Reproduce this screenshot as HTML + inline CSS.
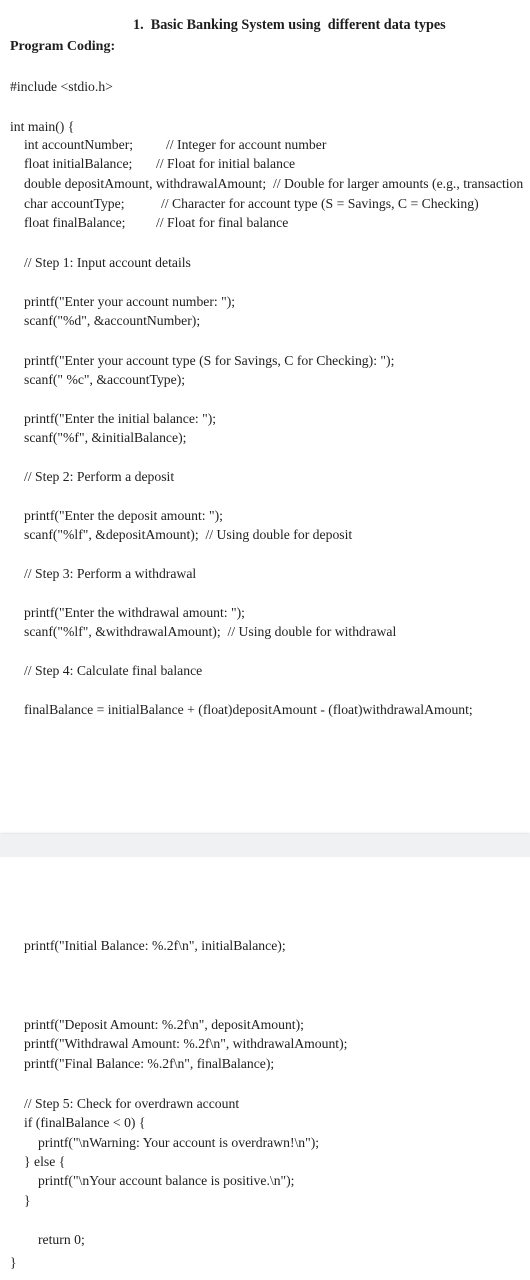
<!DOCTYPE html>
<html><head><meta charset="utf-8"><style>
html,body{margin:0;padding:0;background:#fff;}
body{width:530px;height:1280px;position:relative;overflow:hidden;font-family:"Liberation Serif",serif;font-size:13.7px;color:#1e1e1e;}
.l{position:absolute;white-space:pre;line-height:16px;}
.b{font-weight:bold;}
.band{position:absolute;left:0;top:834px;width:530px;height:23px;background:#f0f1f3;box-shadow:0 -1px 2px rgba(0,0,0,0.12);}
</style></head><body>
<div class="l b" style="left:133px;top:17px;font-size:14.2px">1.  Basic Banking System using  different data types</div>
<div class="l b" style="left:10px;top:39px;font-size:14px">Program Coding:</div>
<div class="l" style="left:10px;top:79px">#include &lt;stdio.h&gt;</div>
<div class="l" style="left:10px;top:119px">int main() {</div>
<div class="l" style="left:24px;top:137px">int accountNumber;</div><div class="l" style="left:166px;top:137px">// Integer for account number</div>
<div class="l" style="left:24px;top:156px">float initialBalance;</div><div class="l" style="left:156px;top:156px">// Float for initial balance</div>
<div class="l" style="left:24px;top:176px">double depositAmount, withdrawalAmount;  // Double for larger amounts (e.g., transaction</div>
<div class="l" style="left:24px;top:196px">char accountType;</div><div class="l" style="left:161px;top:196px">// Character for account type (S = Savings, C = Checking)</div>
<div class="l" style="left:24px;top:215px">float finalBalance;</div><div class="l" style="left:156px;top:215px">// Float for final balance</div>
<div class="l" style="left:24px;top:255px">// Step 1: Input account details</div>
<div class="l" style="left:24px;top:294px">printf("Enter your account number: ");</div>
<div class="l" style="left:24px;top:313px">scanf("%d", &amp;accountNumber);</div>
<div class="l" style="left:24px;top:353px">printf("Enter your account type (S for Savings, C for Checking): ");</div>
<div class="l" style="left:24px;top:372px">scanf(" %c", &amp;accountType);</div>
<div class="l" style="left:24px;top:411px">printf("Enter the initial balance: ");</div>
<div class="l" style="left:24px;top:430px">scanf("%f", &amp;initialBalance);</div>
<div class="l" style="left:24px;top:469px">// Step 2: Perform a deposit</div>
<div class="l" style="left:24px;top:508px">printf("Enter the deposit amount: ");</div>
<div class="l" style="left:24px;top:527px">scanf("%lf", &amp;depositAmount);  // Using double for deposit</div>
<div class="l" style="left:24px;top:566px">// Step 3: Perform a withdrawal</div>
<div class="l" style="left:24px;top:605px">printf("Enter the withdrawal amount: ");</div>
<div class="l" style="left:24px;top:624px">scanf("%lf", &amp;withdrawalAmount);  // Using double for withdrawal</div>
<div class="l" style="left:24px;top:663px">// Step 4: Calculate final balance</div>
<div class="l" style="left:24px;top:702px">finalBalance = initialBalance + (float)depositAmount - (float)withdrawalAmount;</div>
<div class="band"></div>
<div class="l" style="left:24px;top:938px">printf("Initial Balance: %.2f\n", initialBalance);</div>
<div class="l" style="left:24px;top:1017px">printf("Deposit Amount: %.2f\n", depositAmount);</div>
<div class="l" style="left:24px;top:1036px">printf("Withdrawal Amount: %.2f\n", withdrawalAmount);</div>
<div class="l" style="left:24px;top:1056px">printf("Final Balance: %.2f\n", finalBalance);</div>
<div class="l" style="left:24px;top:1096px">// Step 5: Check for overdrawn account</div>
<div class="l" style="left:24px;top:1115px">if (finalBalance &lt; 0) {</div>
<div class="l" style="left:38px;top:1135px">printf("\nWarning: Your account is overdrawn!\n");</div>
<div class="l" style="left:24px;top:1154px">} else {</div>
<div class="l" style="left:38px;top:1173px">printf("\nYour account balance is positive.\n");</div>
<div class="l" style="left:24px;top:1193px">}</div>
<div class="l" style="left:38px;top:1232px">return 0;</div>
<div class="l" style="left:10px;top:1255px">}</div>
</body></html>
